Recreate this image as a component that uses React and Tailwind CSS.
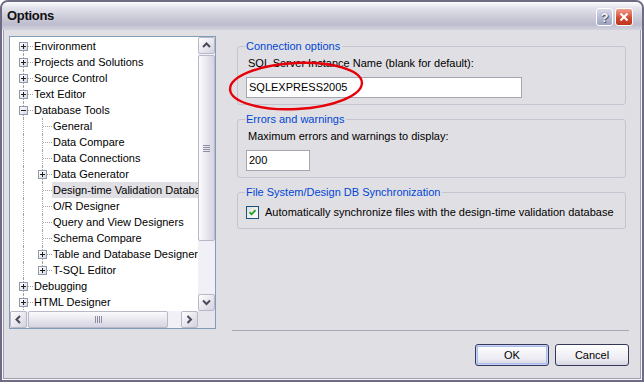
import React from "react";

const treeItems = [
  { label: "Environment", level: 0, exp: "+", first: true },
  { label: "Projects and Solutions", level: 0, exp: "+" },
  { label: "Source Control", level: 0, exp: "+" },
  { label: "Text Editor", level: 0, exp: "+" },
  { label: "Database Tools", level: 0, exp: "-" },
  { label: "General", level: 1 },
  { label: "Data Compare", level: 1 },
  { label: "Data Connections", level: 1 },
  { label: "Data Generator", level: 1, exp: "+" },
  { label: "Design-time Validation Database", level: 1, selected: true },
  { label: "O/R Designer", level: 1 },
  { label: "Query and View Designers", level: 1 },
  { label: "Schema Compare", level: 1 },
  { label: "Table and Database Designers", level: 1, exp: "+" },
  { label: "T-SQL Editor", level: 1, exp: "+", last: true },
  { label: "Debugging", level: 0, exp: "+" },
  { label: "HTML Designer", level: 0, exp: "+" },
];

const Expander = ({ sign }) => (
  <div className="absolute left-[5px] top-[4px] w-[9px] h-[9px] border border-[#8f9bad] bg-[linear-gradient(135deg,#ffffff,#d9d8e2)]">
    <div className="absolute left-[1px] top-[3px] w-[5px] h-px bg-[#1f1f1f]" />
    {sign === "+" && <div className="absolute left-[3px] top-[1px] w-px h-[5px] bg-[#1f1f1f]" />}
  </div>
);

const Cell = ({ vline, hline, exp }) => (
  <div className="relative w-[19px] h-[16px] shrink-0">
    {vline === "full" && <div className="absolute left-[9px] top-0 h-[16px] border-l border-dotted border-[#a3a3a3]" />}
    {vline === "bottom" && <div className="absolute left-[9px] top-[8px] h-[8px] border-l border-dotted border-[#a3a3a3]" />}
    {vline === "top" && <div className="absolute left-[9px] top-0 h-[8px] border-l border-dotted border-[#a3a3a3]" />}
    {hline && <div className="absolute left-[10px] top-[8px] w-[9px] border-t border-dotted border-[#a3a3a3]" />}
    {exp && <Expander sign={exp} />}
  </div>
);

const TreeRow = ({ item }) => (
  <div className="flex items-center h-[16px] pl-[4px]">
    {item.level === 0 ? (
      <Cell vline={item.first ? "bottom" : "full"} hline exp={item.exp} />
    ) : (
      <>
        <Cell vline="full" />
        <Cell vline={item.last ? "top" : "full"} hline exp={item.exp} />
      </>
    )}
    <span
      className={
        "pl-[1px] pr-[2px] leading-[16px] whitespace-nowrap text-black " +
        (item.selected ? "bg-[#e0dfe3] pr-[40px]" : "")
      }
    >
      {item.label}
    </span>
  </div>
);

const Arrow = ({ dir }) => {
  const paths = {
    up: "M1 5 L4.5 1.5 L8 5",
    down: "M1 1.5 L4.5 5 L8 1.5",
    left: "M5 1 L1.5 4.5 L5 8",
    right: "M1.5 1 L5 4.5 L1.5 8",
  };
  const vert = dir === "up" || dir === "down";
  return (
    <svg width={vert ? 9 : 7} height={vert ? 7 : 9} viewBox={vert ? "0 0 9 7" : "0 0 7 9"}>
      <path d={paths[dir]} fill="none" stroke="#4a4a5a" strokeWidth="2" />
    </svg>
  );
};

const ScrollBtn = ({ dir }) => (
  <div className="w-[17px] h-[17px] shrink-0 flex items-center justify-center rounded-[2px] border border-[#b9b8c9] bg-[linear-gradient(135deg,#ffffff,#d3d2df)]">
    <Arrow dir={dir} />
  </div>
);

const Fieldset = ({ title, className = "", children }) => (
  <fieldset className={"w-[389px] ml-[5px] border border-[#c4c3cf] rounded-[3px] pl-[7px] pr-[7px] " + className}>
    <legend className="pl-[1px] pr-[2px] leading-[13px] text-[#0046d5]">{title}</legend>
    {children}
  </fieldset>
);

export default function App() {
  return (
    <div className="relative w-[644px] h-[382px] rounded-t-[8px] border-2 border-[#6d6c84] bg-[#e0dfe3] overflow-hidden flex flex-col text-[11px] font-['Liberation_Sans',Arial,sans-serif]">
      {/* title bar */}
      <div className="h-[28px] shrink-0 flex items-center pl-[5px] pr-[9px] bg-[linear-gradient(180deg,#fdfdfe_0%,#e3e3ec_20%,#cccbd9_55%,#bebdcf_80%,#d3d3de_100%)]">
        <span className="text-[13px] font-bold text-[#111] tracking-[-0.3px]">Options</span>
        <div className="ml-auto flex gap-[2px] mt-[2px]">
          <div className="w-[17px] h-[18px] rounded-[3px] border border-white bg-[linear-gradient(180deg,#d9dbea,#9da1bd)] flex items-center justify-center text-white font-bold text-[13px] leading-none [text-shadow:0_0_1px_#3a3d5a,1px_1px_0_#55597a]">
            ?
          </div>
          <div className="w-[18px] h-[18px] rounded-[3px] border border-white bg-[linear-gradient(180deg,#f0a08e,#d0442c_60%,#bf3620)] flex items-center justify-center">
            <svg width="10" height="10" viewBox="0 0 10 10">
              <path d="M1.5 1.5 L8.5 8.5 M8.5 1.5 L1.5 8.5" stroke="#ffffff" strokeWidth="2.2" />
            </svg>
          </div>
        </div>
      </div>

      {/* body */}
      <div className="flex-1 flex border-x border-b border-[#f7f7fa]">
        <div className="flex-1 flex items-start border-x border-b border-[#9e9db2] pl-[5px] pt-[6px]">
          {/* tree */}
          <div className="w-[207px] h-[293px] shrink-0 border border-[#7f9db9] flex flex-col bg-white">
            <div className="flex h-[274px]">
              <div className="w-[188px] h-[274px] overflow-hidden pt-[1px]">
                {treeItems.map((item) => (
                  <TreeRow key={item.label} item={item} />
                ))}
              </div>
              <div className="w-[17px] flex flex-col bg-[#f1f0f6]">
                <ScrollBtn dir="up" />
                <div className="mt-[1px] h-[186px] rounded-[2px] border border-[#b9b8c9] bg-[linear-gradient(90deg,#fbfbfd,#d5d4e1)] flex flex-col items-center justify-center gap-[1px]">
                  <div className="w-[7px] h-px bg-[#8d8ca3]" />
                  <div className="w-[7px] h-px bg-[#8d8ca3]" />
                  <div className="w-[7px] h-px bg-[#8d8ca3]" />
                  <div className="w-[7px] h-px bg-[#8d8ca3]" />
                </div>
                <div className="flex-1" />
                <ScrollBtn dir="down" />
              </div>
            </div>
            <div className="flex h-[17px]">
              <div className="w-[188px] flex bg-[#f1f0f6]">
                <ScrollBtn dir="left" />
                <div className="ml-[1px] w-[140px] rounded-[2px] border border-[#b9b8c9] bg-[linear-gradient(180deg,#fbfbfd,#d5d4e1)] flex items-center justify-center gap-[1px]">
                  <div className="w-px h-[7px] bg-[#8d8ca3]" />
                  <div className="w-px h-[7px] bg-[#8d8ca3]" />
                  <div className="w-px h-[7px] bg-[#8d8ca3]" />
                  <div className="w-px h-[7px] bg-[#8d8ca3]" />
                </div>
                <div className="flex-1" />
                <ScrollBtn dir="right" />
              </div>
              <div className="w-[17px] bg-[#e6e5ec]" />
            </div>
          </div>

          {/* right panel */}
          <div className="ml-[16px] w-[397px] self-stretch flex flex-col pt-[4px] pb-[12px] text-black">
            <Fieldset title="Connection options" className="pb-[6px]">
              <div className="pt-[4px] ml-[3px] leading-[13px]">SQL Server Instance Name (blank for default):</div>
              <div className="mt-[7px] ml-[1px] w-[276px] h-[21px] border border-[#a5a5b3] bg-white pl-[2px] leading-[19px]">
                SQLEXPRESS2005
              </div>
            </Fieldset>

            <Fieldset title="Errors and warnings" className="mt-[8px] pb-[6px]">
              <div className="pt-[4px] ml-[3px] leading-[13px]">Maximum errors and warnings to display:</div>
              <div className="mt-[7px] ml-[1px] w-[64px] h-[21px] border border-[#a5a5b3] bg-white pl-[2px] leading-[19px]">
                200
              </div>
            </Fieldset>

            <Fieldset title="File System/Design DB Synchronization" className="mt-[8px] pb-[9px]">
              <div className="pt-[7px] ml-[1px] flex items-center">
                <div className="w-[13px] h-[13px] border border-[#1c5180] bg-[linear-gradient(135deg,#dcdcd7,#ffffff)] flex items-center justify-center">
                  <svg width="7" height="7" viewBox="0 0 7 7">
                    <path d="M0.5 3.2 L2.6 5.3 L6.5 1.2" fill="none" stroke="#21a121" strokeWidth="1.8" />
                  </svg>
                </div>
                <span className="ml-[6px] leading-[13px]">
                  Automatically synchronize files with the design-time validation database
                </span>
              </div>
            </Fieldset>

            <div className="mt-auto h-px bg-[#a6a5b5]" />
            <div className="mt-[13px] flex justify-end gap-[6px]">
              <button className="w-[74px] h-[22px] rounded-[3px] border border-[#35385a] bg-[linear-gradient(180deg,#ffffff,#ecebf2_70%,#d6d5e2)] shadow-[inset_0_0_0_1px_#c6d4f7,inset_0_0_0_2px_#a8bbec] text-black">
                OK
              </button>
              <button className="w-[74px] h-[22px] rounded-[3px] border border-[#35385a] bg-[linear-gradient(180deg,#ffffff,#ecebf2_70%,#d6d5e2)] text-black">
                Cancel
              </button>
            </div>
          </div>
        </div>
      </div>

      {/* hand-drawn red ellipse */}
      <svg className="absolute left-[226px] top-[59px] pointer-events-none overflow-visible" width="140" height="54" viewBox="0 0 140 54">
        <ellipse cx="68" cy="25" rx="66" ry="23" transform="rotate(-3 68 25)" fill="none" stroke="#e6000a" strokeWidth="2.4" />
      </svg>
    </div>
  );
}
